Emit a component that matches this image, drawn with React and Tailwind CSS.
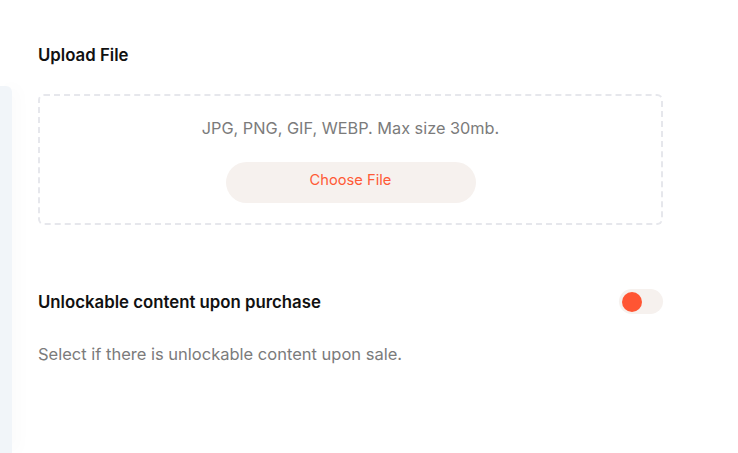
export default function App() {
  return (
    <div className="w-[738px] h-[453px] bg-white flex overflow-hidden" style={{ fontFamily: "Inter, 'Liberation Sans', sans-serif" }}>
      <div className="w-[12px] shrink-0 mt-[86px] bg-[#f1f5f9] rounded-tr-[6px] shadow-[6px_0_16px_rgba(0,0,0,0.025)]" />
      <div className="flex-1 pl-[26px] pt-[44px] pr-[75px]">
        <div className="text-[16.8px] font-semibold text-[#111] leading-[22px]">Upload File</div>
        <div className="mt-[28px] h-[131px] border-2 border-dashed border-[#e6e7ec] rounded-[6px] flex flex-col items-center pt-[21px]">
          <div className="text-[16.3px] text-[#7b7b7b] leading-[22px]">JPG, PNG, GIF, WEBP. Max size 30mb.</div>
          <button className="mt-[23px] w-[250px] h-[41px] rounded-full bg-[#f6f1ee] text-[#ff5a36] text-[14.7px] pb-[4px]">Choose File</button>
        </div>
        <div className="mt-[64px] flex items-center justify-between">
          <div className="text-[16.8px] font-semibold text-[#111] leading-[22px]">Unlockable content upon purchase</div>
          <div className="w-[44px] h-[25px] rounded-full bg-[#f6f1ee] flex items-center pl-[3px]">
            <div className="w-[20px] h-[20px] rounded-full bg-[#ff5533]" />
          </div>
        </div>
        <div className="mt-[29px] text-[16.5px] text-[#7b7b7b] leading-[22px]">Select if there is unlockable content upon sale.</div>
      </div>
    </div>
  );
}
